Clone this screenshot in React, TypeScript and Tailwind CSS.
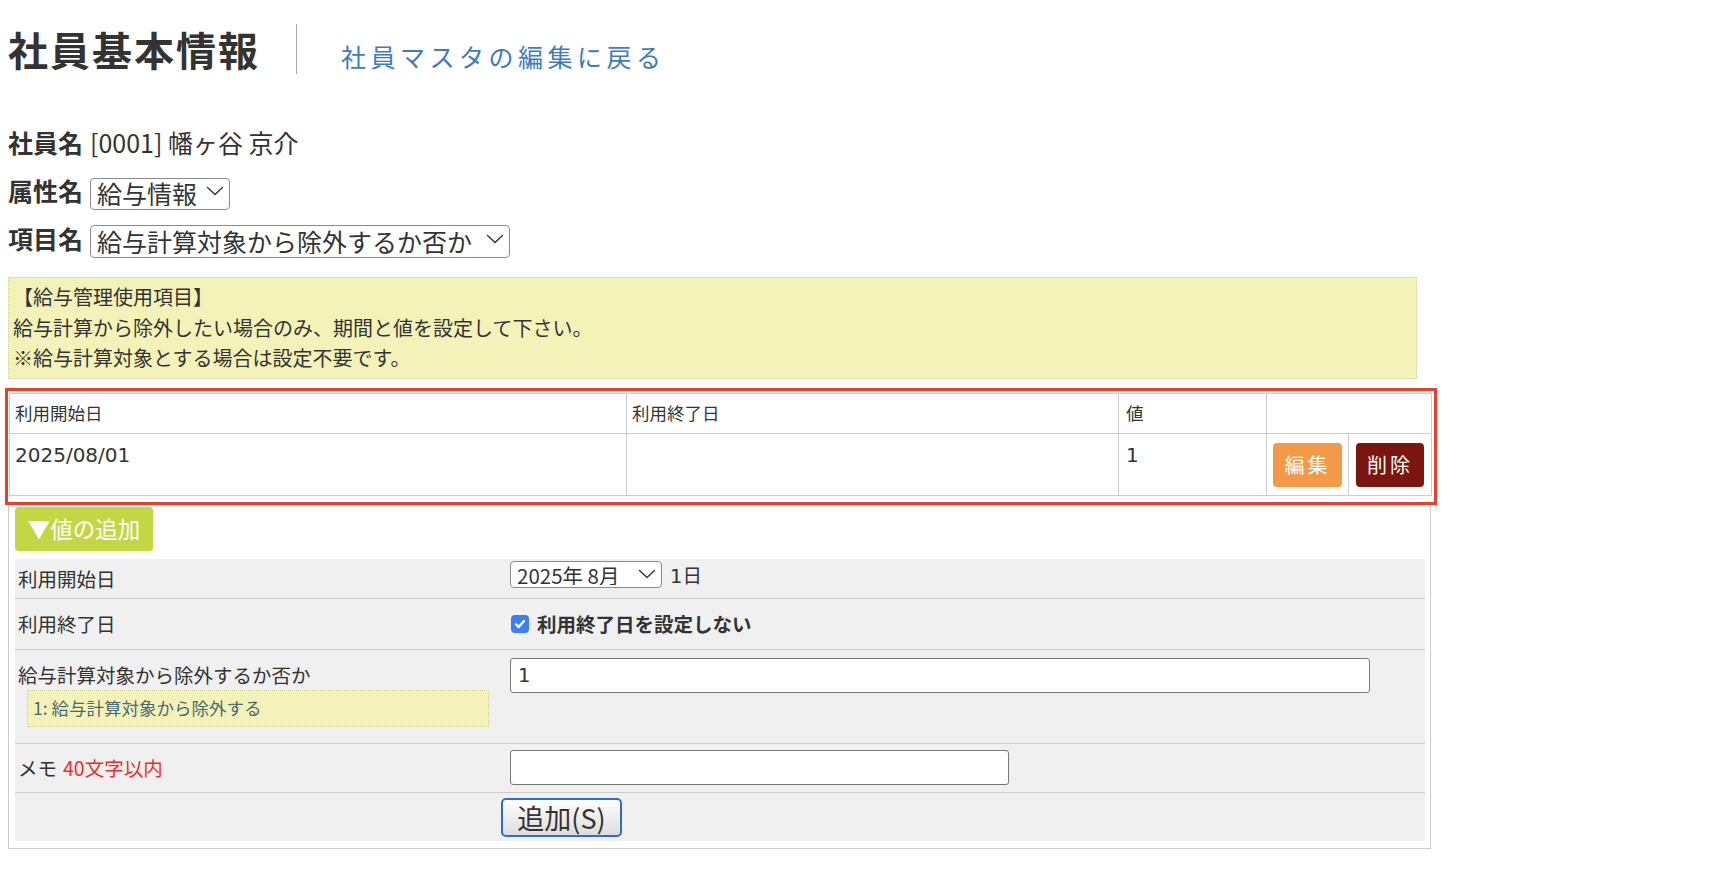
function Chevron() {
  return (
    <svg viewBox="0 0 18 10" className="pointer-events-none absolute right-[6px] top-1/2 h-[10px] w-[18px] -translate-y-1/2" fill="none" stroke="#333" strokeWidth={1.4} strokeLinecap="round" strokeLinejoin="round">
      <path d="M1.5 1.5L9 8.5l7.5-7" />
    </svg>
  );
}

function FakeSelect({ text, width, height, textSize }: { text: string; width: string; height: string; textSize: string }) {
  return (
    <div className={`relative inline-block ${width} ${height}`}>
      <select className={`h-full w-full appearance-none rounded-[4px] border border-[#8a8a8a] bg-white pl-[6px] pr-[30px] leading-none text-[#333] ${textSize}`} defaultValue={text}>
        <option>{text}</option>
      </select>
      <Chevron />
    </div>
  );
}

export default function App() {
  return (
    <div className="min-h-screen bg-white px-2 text-[#333] font-['Noto_Sans_CJK_JP',sans-serif]">
      {/* page header */}
      <div className="flex h-[50px] items-start pt-0 mt-[24px]">
        <h1 className="text-[40px] font-bold leading-[50px] tracking-[2px]">社員基本情報</h1>
        <div className="ml-[36px] h-[50px] w-px bg-[#aaa]" />
        <a href="#" className="ml-[44px] pt-[14px] text-[25px] leading-[36px] tracking-[4.5px] text-[#3d7bbd]">
          社員マスタの編集に戻る
        </a>
      </div>

      {/* employee / attribute / item */}
      <div className="mt-[45px] text-[25px]">
        <div className="flex h-[48px] items-center">
          <span className="font-bold">社員名</span>
          <span className="ml-[7px]">[0001] 幡ヶ谷 京介</span>
        </div>
        <div className="flex h-[48px] items-center gap-[7px]">
          <span className="font-bold">属性名</span>
          <FakeSelect text="給与情報" width="w-[140px]" height="h-[32px]" textSize="text-[25px]" />
        </div>
        <div className="flex h-[48px] items-center gap-[7px]">
          <span className="font-bold">項目名</span>
          <FakeSelect text="給与計算対象から除外するか否か" width="w-[420px]" height="h-[33px]" textSize="text-[25px]" />
        </div>
      </div>

      {/* notice */}
      <div className="mt-[14px] w-[1409px] border border-dotted border-[#d2d29a] bg-[#f3f3b9] px-[4px] py-[4px] text-[20px] leading-[30.5px]">
        <div>【給与管理使用項目】</div>
        <div>給与計算から除外したい場合のみ、期間と値を設定して下さい。</div>
        <div>※給与計算対象とする場合は設定不要です。</div>
      </div>

      {/* registered values */}
      <div className="-ml-[3px] mt-[9px] w-[1432px] border-[3px] border-[#e6412b] pb-[6px] pl-[1px] pr-[3px] pt-[2px]">
        <table className="w-[1422px] table-fixed border-collapse text-[17.5px]">
          <colgroup>
            <col className="w-[617px]" />
            <col className="w-[492px]" />
            <col className="w-[148px]" />
            <col className="w-[82px]" />
            <col className="w-[83px]" />
          </colgroup>
          <thead>
            <tr className="h-[40px]">
              <th className="border border-[#ccc] px-[5px] text-left font-normal">利用開始日</th>
              <th className="border border-[#ccc] px-[5px] text-left font-normal">利用終了日</th>
              <th className="border border-[#ccc] px-[7px] text-left font-normal">値</th>
              <th colSpan={2} className="border border-[#ccc]" />
            </tr>
          </thead>
          <tbody>
            <tr className="h-[62px] font-['DejaVu_Sans','Noto_Sans_CJK_JP',sans-serif] text-[20px]">
              <td className="border border-[#ccc] px-[5px] pt-[6px] align-top">2025/08/01</td>
              <td className="border border-[#ccc] px-[5px] pt-[6px] align-top" />
              <td className="border border-[#ccc] px-[7px] pt-[6px] align-top">1</td>
              <td className="border border-[#ccc] pt-[9px] text-center align-top">
                <button className="h-[44px] w-[69px] rounded-[4px] bg-[#f29a48] font-['Noto_Sans_CJK_JP',sans-serif] text-[20px] tracking-[3px] text-white">編集</button>
              </td>
              <td className="border border-[#ccc] pt-[9px] text-center align-top">
                <button className="h-[44px] w-[68px] rounded-[4px] bg-[#7b150f] font-['Noto_Sans_CJK_JP',sans-serif] text-[20px] tracking-[3px] text-white">削除</button>
              </td>
            </tr>
          </tbody>
        </table>
      </div>

      {/* add form */}
      <div className="w-[1423px] border-x border-b border-[#ccc] px-[6px] pb-[7px] pt-[2px]">
        <button className="flex h-[44px] w-[138px] items-center justify-center rounded-[4px] bg-[#c3d644] text-[22.5px] text-white">
          ▼値の追加
        </button>

        <div className="mt-[8px] w-[1410px] bg-[#f0f0f0] text-[19.5px]">
          <div className="grid h-[40px] grid-cols-[486px_1fr] border-b border-[#ccc]">
            <div className="flex items-center pl-[3px] pt-[2px]">利用開始日</div>
            <div className="flex items-start gap-[8px] pl-[9px] pt-[2px]">
              <FakeSelect text="2025年 8月" width="w-[152px]" height="h-[27px]" textSize="text-[20.5px]" />
              <span className="leading-[27px]">
                <span className="font-['DejaVu_Sans',sans-serif]">1</span>日
              </span>
            </div>
          </div>

          <div className="grid h-[51px] grid-cols-[486px_1fr] border-b border-[#ccc]">
            <div className="flex items-center pl-[3px]">利用終了日</div>
            <div className="flex items-center gap-[8px] pl-[10px]">
              <span className="flex h-[18px] w-[18px] items-center justify-center rounded-[4px] bg-[#3b7ff5]">
                <svg viewBox="0 0 16 16" className="h-[14px] w-[14px]" fill="none" stroke="white" strokeWidth={2.8} strokeLinecap="round" strokeLinejoin="round">
                  <path d="M3.5 8.5l3 3 6-7" />
                </svg>
              </span>
              <span className="font-bold">利用終了日を設定しない</span>
            </div>
          </div>

          <div className="grid h-[94px] grid-cols-[486px_1fr] border-b border-[#ccc]">
            <div className="pl-[3px] pt-[11px]">
              <div className="leading-[28px]">給与計算対象から除外するか否か</div>
              <div className="ml-[9px] mt-[1px] flex h-[37px] w-[462px] items-center border border-dotted border-[#d2d29a] bg-[#f3f3b9] pl-[5px] text-[17.5px] text-[#4b6875]">
                1: 給与計算対象から除外する
              </div>
            </div>
            <div className="pl-[9px] pt-[8px]">
              <input defaultValue="1" className="h-[35px] w-[860px] rounded-[3px] border border-[#777] bg-white pl-[7px] font-['DejaVu_Sans',sans-serif] text-[19.5px] text-[#333]" />
            </div>
          </div>

          <div className="grid h-[49px] grid-cols-[486px_1fr] border-b border-[#ccc]">
            <div className="flex items-center pl-[3px] pt-[1px]">
              メモ <span className="ml-[6px] text-[#e8302a]">40文字以内</span>
            </div>
            <div className="flex items-center pl-[9px]">
              <input className="h-[35px] w-[499px] rounded-[3px] border border-[#777] bg-white" />
            </div>
          </div>

          <div className="grid h-[48px] grid-cols-[486px_1fr]">
            <div />
            <div className="pt-[5px]">
              <button className="h-[39px] w-[121px] rounded-[5px] border-2 border-[#2f6bd6] bg-gradient-to-b from-white to-[#dcdcdc] text-[27px] leading-none text-[#333]">
                追加(S)
              </button>
            </div>
          </div>
        </div>
      </div>
    </div>
  );
}
